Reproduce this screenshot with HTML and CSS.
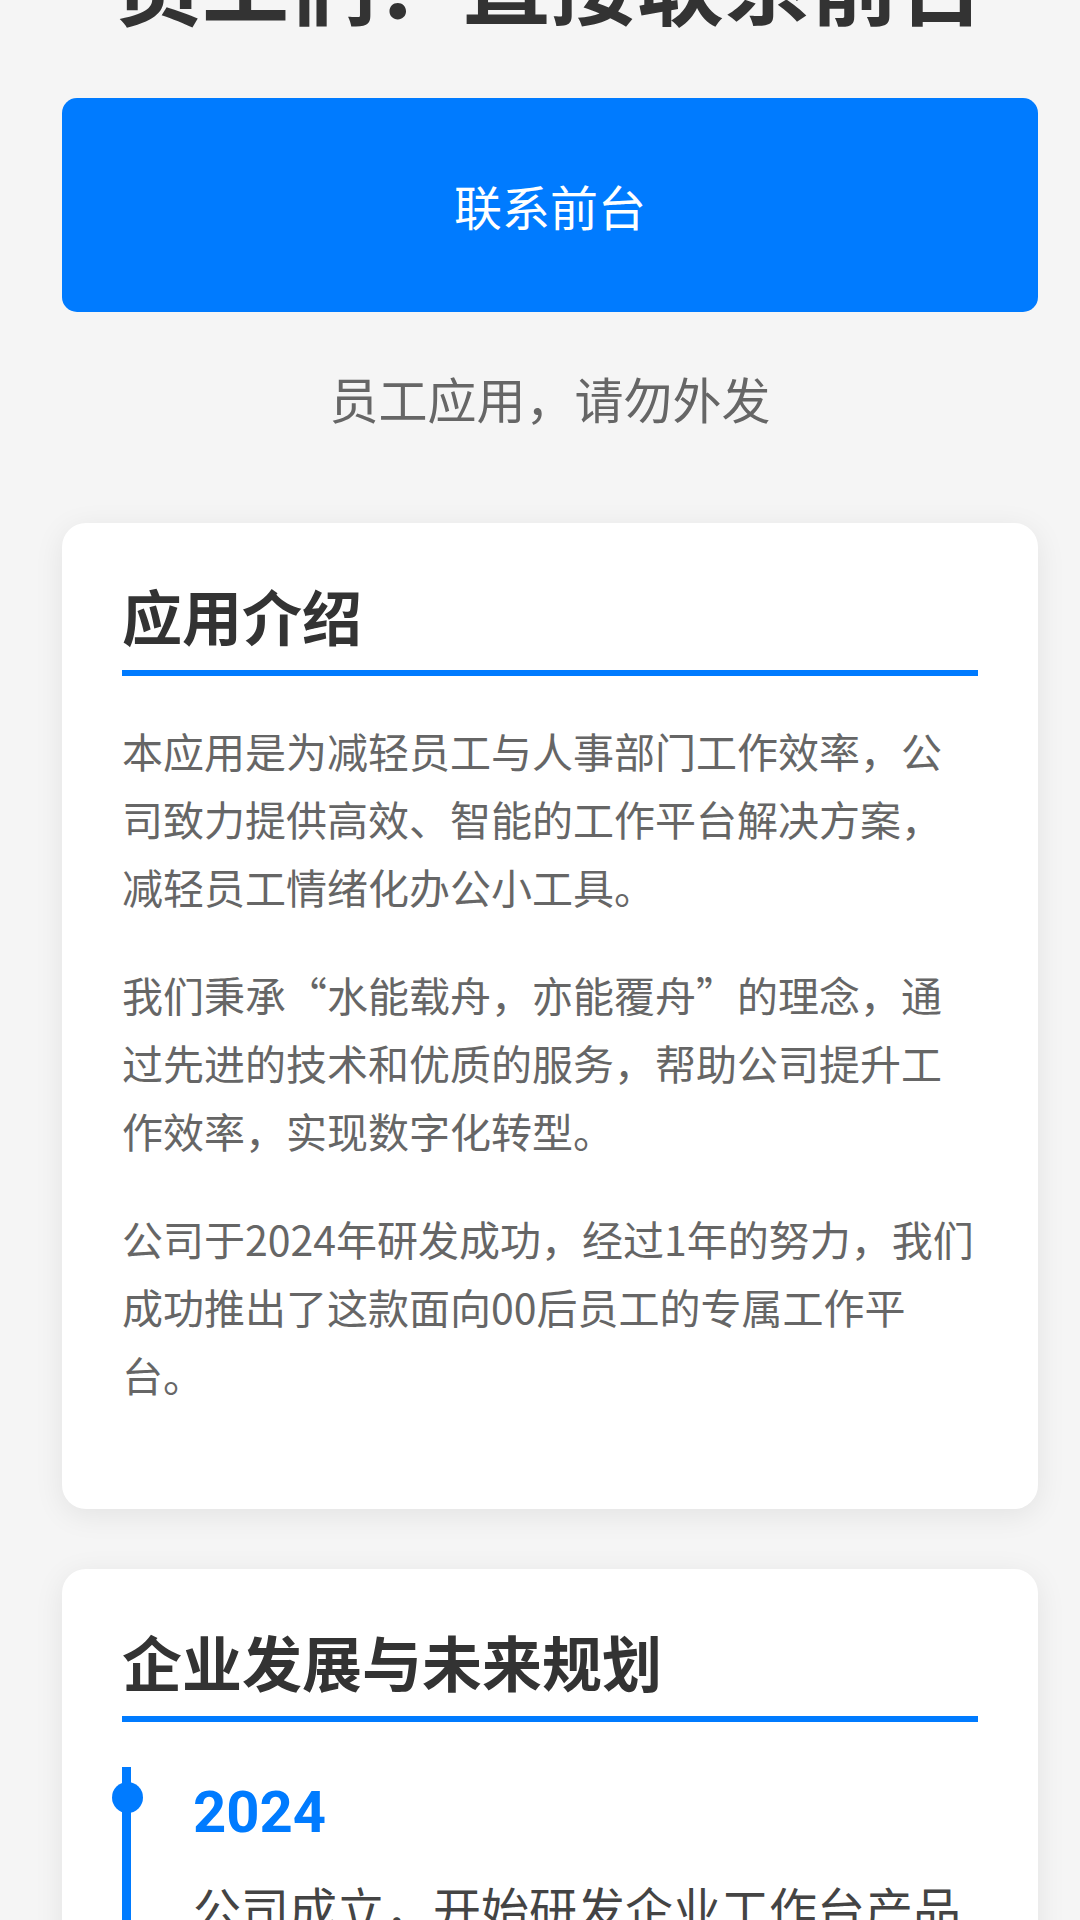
FILE: index.html
```html
<!DOCTYPE html>
<html lang="zh-CN">
<head>
  <meta charset="UTF-8">
  <meta name="viewport" content="width=device-width, initial-scale=1">
  <title>员工工作台</title>
  <link rel="stylesheet" href="styles.css">
</head>
<body>
  <main class="page">
    <h1 class="page-title">员工们：直接联系前台</h1>
    <button class="btn-contact">联系前台</button>
    <p class="notice">员工应用，请勿外发</p>

    <section class="card">
      <h2 class="card-title">应用介绍</h2>
      <p>本应用是为减轻员工与人事部门工作效率，公司致力提供高效、智能的工作平台解决方案，减轻员工情绪化办公小工具。</p>
      <p>我们秉承“水能载舟，亦能覆舟”的理念，通过先进的技术和优质的服务，帮助公司提升工作效率，实现数字化转型。</p>
      <p>公司于2024年研发成功，经过1年的努力，我们成功推出了这款面向00后员工的专属工作平台。</p>
    </section>

    <section class="card">
      <h2 class="card-title">企业发展与未来规划</h2>
      <div class="timeline">
        <div class="timeline-item">
          <span class="dot"></span>
          <div class="year">2024</div>
          <div class="desc">公司成立，开始研发企业工作台产品</div>
        </div>
        <div class="timeline-item">
          <span class="dot"></span>
          <div class="year">2025</div>
          <div class="desc">正式上线，服务公司全体员工</div>
        </div>
      </div>
    </section>
  </main>
</body>
</html>
```

FILE: styles.css
```css
:root {
  --bg: #f5f5f5;
  --card: #ffffff;
  --text: #333333;
  --muted: #666666;
  --primary: #007bff;
}

body {
  margin: 0;
  background-color: var(--bg);
  color: var(--text);
  font-family: "Noto Sans CJK SC", Roboto, sans-serif;
}

.page {
  padding: 0 42px 120px 62px;
}

.page-title {
  margin: -71px 0 65px;
  font-size: 87px;
  line-height: 1.2;
  font-weight: bold;
  text-align: center;
  color: var(--text);
}

.btn-contact {
  display: block;
  width: 100%;
  padding: 75px 0;
  border: none;
  border-radius: 15px;
  background-color: var(--primary);
  color: white;
  font-family: inherit;
  font-size: 48px;
  line-height: 64px;
  cursor: pointer;
}

.notice {
  margin: 50px 0 89px;
  font-size: 49px;
  line-height: 72px;
  text-align: center;
  color: var(--muted);
}

.card {
  background-color: var(--card);
  border-radius: 24px;
  padding: 60px;
  margin-bottom: 60px;
  box-shadow: 0 6px 30px rgba(0, 0, 0, 0.08);
}

.card-title {
  margin: 0 0 41px;
  padding-bottom: 23px;
  border-bottom: 6px solid var(--primary);
  font-size: 60px;
  line-height: 64px;
  font-weight: bold;
}

.card p {
  margin: 41px 0;
  font-size: 41px;
  line-height: 1.65;
  color: var(--muted);
}

.timeline {
  margin-top: 45px;
  border-left: 9px solid var(--primary);
  padding-left: 62px;
}

.timeline-item {
  position: relative;
  padding-bottom: 60px;
}

.dot {
  position: absolute;
  left: -81px;
  top: 15px;
  width: 31px;
  height: 31px;
  border-radius: 50%;
  background-color: var(--primary);
}

.year {
  margin-bottom: 12px;
  font-family: Roboto, "Noto Sans CJK SC", sans-serif;
  font-size: 58px;
  line-height: 90px;
  font-weight: bold;
  color: var(--primary);
}

.desc {
  font-size: 48px;
  line-height: 1.6;
  color: #444444;
}
```
